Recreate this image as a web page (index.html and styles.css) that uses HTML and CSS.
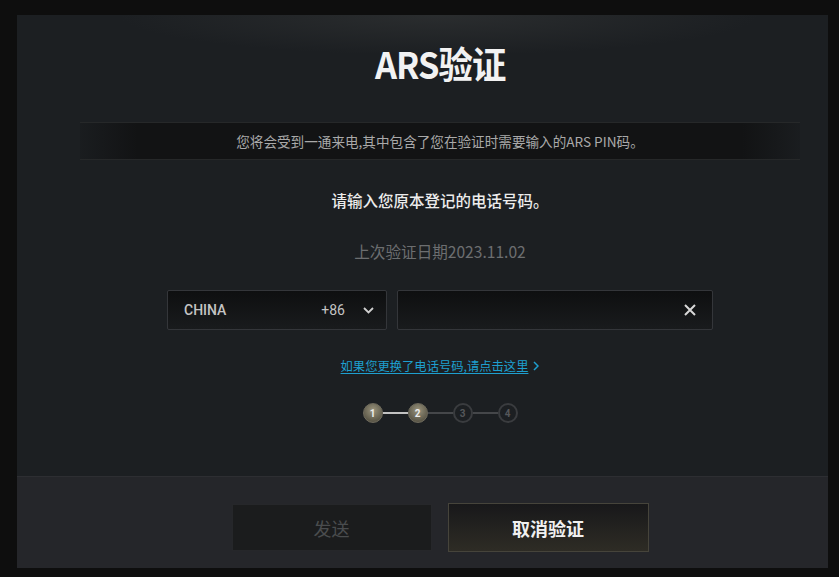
FILE: index.html
```html
<!DOCTYPE html>
<html lang="zh-CN">
<head>
<meta charset="utf-8">
<title>ARS验证</title>
<link rel="stylesheet" href="styles.css">
</head>
<body>
<div class="panel">
  <div class="main">
    <h1 class="title">ARS验证</h1>
    <div class="info-bar">您将会受到一通来电,其中包含了您在验证时需要输入的ARS PIN码。</div>
    <p class="prompt">请输入您原本登记的电话号码。</p>
    <p class="last-date">上次验证日期2023.11.02</p>
    <div class="inputs">
      <div class="country">
        <span class="country-name">CHINA</span>
        <span class="country-code">+86</span>
        <svg class="chevron" width="11" height="7" viewBox="0 0 11 7"><path d="M1 1l4.5 4.5L10 1" fill="none" stroke="#d0d0d0" stroke-width="1.8"/></svg>
      </div>
      <div class="phone">
        <svg class="clear" width="12" height="12" viewBox="0 0 12 12"><path d="M1 1l10 10M11 1L1 11" fill="none" stroke="#d8d8d8" stroke-width="2"/></svg>
      </div>
    </div>
    <a class="change-link" href="#"><span class="link-text">如果您更换了电话号码,请点击这里</span><svg class="link-arrow" width="6" height="10" viewBox="0 0 6 10"><path d="M1 1l4 4-4 4" fill="none" stroke="#1e9fcf" stroke-width="1.5"/></svg></a>
    <div class="steps">
      <span class="step done">1</span>
      <span class="line line-done"></span>
      <span class="step done">2</span>
      <span class="line"></span>
      <span class="step">3</span>
      <span class="line"></span>
      <span class="step">4</span>
    </div>
  </div>
  <div class="footer">
    <button class="btn btn-send" disabled>发送</button>
    <button class="btn btn-cancel">取消验证</button>
  </div>
</div>
</body>
</html>
```

FILE: styles.css
```css
html, body {
  margin: 0;
  padding: 0;
  background: #0e0e0e;
}
body {
  width: 839px;
  height: 577px;
  overflow: hidden;
  font-family: "Noto Sans CJK SC", Roboto, "Liberation Sans", sans-serif;
}
.panel {
  margin: 15px 0 0 17px;
  width: 811px;
  height: 553px;
  display: flex;
  flex-direction: column;
}
.main {
  height: 461px;
  box-sizing: border-box;
  padding-left: 35px;
  display: flex;
  flex-direction: column;
  align-items: center;
  background:
    radial-gradient(ellipse 320px 40px at 52% 0, rgba(60, 62, 62, 0.45), rgba(60, 62, 62, 0) 100%),
    #1c1f22;
}
.title {
  margin: 28px 0 0;
  height: 40px;
  line-height: 40px;
  font-size: 37px;
  font-weight: 700;
  color: #f2f2f2;
  letter-spacing: -1px;
  transform: scaleX(0.93);
}
.info-bar {
  margin-top: 39px;
  width: 720px;
  height: 38px;
  box-sizing: border-box;
  line-height: 36px;
  text-align: center;
  font-size: 13.6px;
  color: #a9a9a9;
  border-top: 1px solid #262829;
  border-bottom: 1px solid #262829;
  background: linear-gradient(to right, rgba(18,19,20,0.2), #121314 8%, #121314 92%, rgba(18,19,20,0.2));
}
.prompt {
  margin: 29px 0 0;
  height: 22px;
  line-height: 22px;
  font-size: 15.5px;
  font-weight: 500;
  color: #ececec;
}
.last-date {
  margin: 29px 0 0;
  height: 22px;
  line-height: 22px;
  font-size: 15.6px;
  color: #6c6e70;
}
.inputs {
  margin-top: 28px;
  display: flex;
  gap: 10px;
}
.country, .phone {
  height: 40px;
  box-sizing: border-box;
  border: 1px solid #34363a;
  border-radius: 2px;
  background: linear-gradient(#0e0f10, #191b1d);
  display: flex;
  align-items: center;
}
.country {
  width: 220px;
  padding: 0 12px 0 16px;
}
.country-name {
  flex: 1;
  font-family: Roboto, "Liberation Sans", sans-serif;
  font-size: 14px;
  font-weight: 500;
  color: #c4c4c4;
}
.country-code {
  font-family: Roboto, "Liberation Sans", sans-serif;
  font-size: 14px;
  color: #c4c4c4;
  margin-right: 18px;
}
.phone {
  width: 316px;
  justify-content: flex-end;
  padding-right: 16px;
}
.change-link {
  margin-top: 27px;
  height: 18px;
  display: flex;
  align-items: center;
  gap: 5px;
  color: #1e9fcf;
  font-size: 12.3px;
  text-decoration: none;
}
.link-text {
  text-decoration: underline;
  text-underline-offset: 2px;
}
.steps {
  margin-top: 28px;
  height: 20px;
  display: flex;
  align-items: center;
}
.step {
  width: 20px;
  height: 20px;
  box-sizing: border-box;
  border-radius: 50%;
  border: 2px solid #3a3c3f;
  display: flex;
  align-items: center;
  justify-content: center;
  font-family: Roboto, "Liberation Sans", sans-serif;
  font-size: 10px;
  font-weight: 700;
  color: #55575a;
}
.step.done {
  border: 1px solid #6f6b5d;
  background: radial-gradient(circle at 50% 35%, #9a947d, #5a5647 75%);
  color: #ececec;
}
.line {
  width: 25px;
  height: 2px;
  background: #45474a;
}
.line-done {
  background: #c2c2c2;
}
.footer {
  height: 92px;
  box-sizing: border-box;
  border-top: 1px solid #2d2e32;
  background: #25262a;
  padding: 26px 0 0 35px;
  display: flex;
  justify-content: center;
  align-items: flex-start;
  gap: 16px;
}
.btn {
  font-family: "Noto Sans CJK SC", sans-serif;
  font-size: 18px;
  box-sizing: border-box;
  cursor: pointer;
  padding: 0;
}
.btn-send {
  margin-top: 1px;
  width: 200px;
  height: 47px;
  background: #1b1c1d;
  border: 1px solid #26272a;
  color: #4a4c4e;
}
.btn-cancel {
  width: 201px;
  height: 49px;
  background: linear-gradient(#18181a, #2e2c25);
  border: 1px solid #46443b;
  color: #f0f0f0;
  font-weight: 700;
}
```
